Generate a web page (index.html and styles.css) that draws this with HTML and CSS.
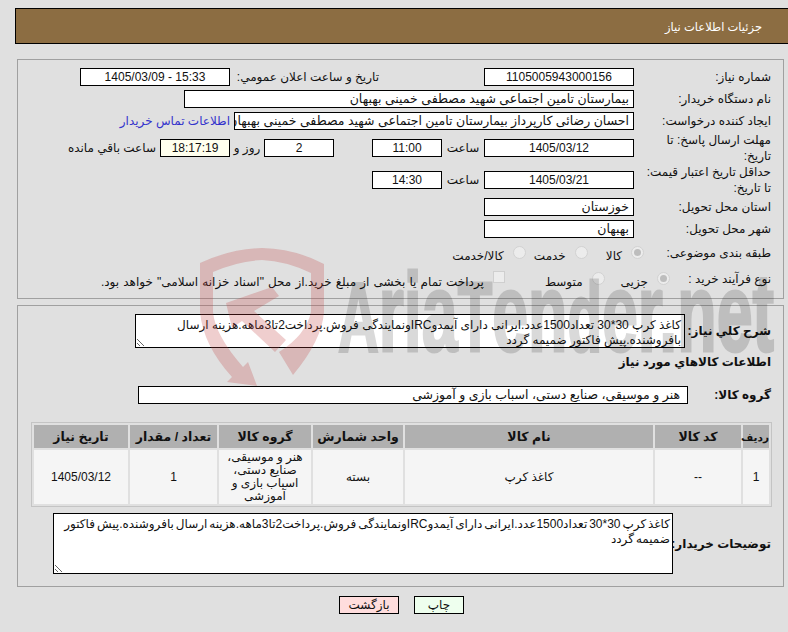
FILE: index.html
```html
<!DOCTYPE html>
<html lang="fa">
<head>
<meta charset="utf-8">
<title>جزئیات اطلاعات نیاز</title>
<link rel="stylesheet" href="styles.css">
</head>
<body>
<div class="page" dir="rtl">
  <header class="title">جزئیات اطلاعات نیاز</header>

  <section class="panel panel-top">
    <div class="row h22">
      <div class="lab">شماره نیاز:</div>
      <div class="box w150 center">1105005943000156</div>
      <div class="m-pub">تاریخ و ساعت اعلان عمومي:</div>
      <div class="box w150 center" dir="ltr">1405/03/09 - 15:33</div>
    </div>
    <div class="row h22">
      <div class="lab">نام دستگاه خریدار:</div>
      <div class="box w450 val">بیمارستان تامین اجتماعی شهید مصطفی خمینی بهبهان</div>
    </div>
    <div class="row h22">
      <div class="lab">ایجاد کننده درخواست:</div>
      <div class="box w400 val">احسان رضائی کارپرداز بیمارستان تامین اجتماعی شهید مصطفی خمینی بهبهان</div>
      <a class="link" href="#">اطلاعات تماس خریدار</a>
    </div>
    <div class="row h32">
      <div class="lab">مهلت ارسال پاسخ: تا<br>تاریخ:</div>
      <div class="box w150 center">1405/03/12</div>
      <div class="unit">ساعت</div>
      <div class="box w70 center">11:00</div>
      <div class="gap30"></div>
      <div class="box w70 center">2</div>
      <div class="unit unit-day">روز و</div>
      <div class="box w70 center yellow">18:17:19</div>
      <div class="rest">ساعت باقي مانده</div>
    </div>
    <div class="row h32">
      <div class="lab">حداقل تاریخ اعتبار قیمت:<br>تا تاریخ:</div>
      <div class="box w150 center">1405/03/21</div>
      <div class="unit">ساعت</div>
      <div class="box w70 center">14:30</div>
    </div>
    <div class="row h22">
      <div class="lab">استان محل تحویل:</div>
      <div class="box w150 val">خوزستان</div>
    </div>
    <div class="row h22">
      <div class="lab">شهر محل تحویل:</div>
      <div class="box w150 val">بهبهان</div>
    </div>
    <div class="row h26">
      <div class="lab lab-r1">طبقه بندی موضوعی:</div>
      <span class="radio on"></span><span class="opt o1">کالا</span>
      <span class="radio"></span><span class="opt o2">خدمت</span>
      <span class="radio"></span><span class="opt">کالا/خدمت</span>
    </div>
    <div class="row h26">
      <div class="lab lab-r2">نوع فرآیند خرید :</div>
      <span class="radio on"></span><span class="opt o3">جزیی</span>
      <span class="radio"></span><span class="opt o4">متوسط</span>
      <span class="check"></span><span class="opt opt-long">پرداخت تمام یا بخشی از مبلغ خرید.از محل "اسناد خزانه اسلامی" خواهد بود.</span>
    </div>
  </section>

  <section class="panel panel-bottom">
    <div class="row summary">
      <div class="lab strong lab-s">شرح کلي نياز:</div>
      <textarea class="area area-s" readonly>کاغذ کرپ 30*30 تعداد1500عدد.ایرانی دارای آیمدوIRCونمایندگی فروش.پرداخت2تا3ماهه.هزینه ارسال بافروشنده.پیش فاکتور ضمیمه گردد</textarea>
    </div>
    <div class="subhead">اطلاعات کالاهاي مورد نياز</div>
    <div class="row group">
      <div class="lab strong lab-g">گروه کالا:</div>
      <div class="box w550 val pad-g">هنر و موسیقی، صنایع دستی، اسباب بازی و آموزشی</div>
    </div>
    <table class="items">
      <thead>
        <tr>
          <th class="c1">ردیف</th><th class="c2">کد کالا</th><th class="c3">نام کالا</th><th class="c4">واحد شمارش</th><th class="c5">گروه کالا</th><th class="c6">تعداد / مقدار</th><th class="c7">تاریخ نیاز</th>
        </tr>
      </thead>
      <tbody>
        <tr>
          <td>1</td><td>--</td><td>کاغذ کرپ</td><td>بسته</td><td>هنر و موسیقی، صنایع دستی، اسباب بازی و آموزشی</td><td>1</td><td>1405/03/12</td>
        </tr>
      </tbody>
    </table>
    <div class="row notes">
      <div class="lab strong lab-n">توضیحات خریدار:</div>
      <textarea class="area area-n" readonly>کاغذ کرپ 30*30 تعداد1500عدد.ایرانی دارای آیمدوIRCونمایندگی فروش.پرداخت2تا3ماهه.هزینه ارسال بافروشنده.پیش فاکتور ضمیمه گردد</textarea>
    </div>
  </section>

  <div class="actions">
    <button class="btn print" type="button">چاپ</button>
    <button class="btn back" type="button">بازگشت</button>
  </div>
</div>

<svg class="mark" width="788" height="632" viewBox="0 0 788 632" aria-hidden="true">
  <g fill="#bf3a3a" fill-opacity=".25">
    <path d="M200 263 Q230 249 262 248 Q296 249 324 264 V312 Q322 340 293 375 L279 352 Q306 335 311 312 V273 Q286 261 262 260 Q238 261 213 272 V312 Q215 335 243 367 L248 362 L257 386 L227 382 L232 377 Q203 345 200 312 Z"/>
    <path d="M226 303 L272 287 L279 296 L254 311 L286 340 L275 352 L242 321 L232 328 Z"/>
  </g>
  <g class="mark-group">
    <text class="mark-text" x="338" y="351" textLength="436" lengthAdjust="spacingAndGlyphs"><tspan class="mark-cap">A</tspan>ria<tspan class="mark-cap">T</tspan>en<tspan class="mark-cap">d</tspan>er.net</text>
  </g>
</svg>
</body>
</html>
```
FILE: styles.css
```css
html, body { margin: 0; padding: 0; height: 100%; overflow: hidden; }
body { background: #e0e0e0; color: #111; font: 12px "Liberation Sans", "DejaVu Sans", sans-serif; position: relative; }
.page { width: 773px; margin-left: 15px; padding-top: 8px; }
.title { height: 34px; line-height: 36px; margin-bottom: 15px; background: #8c6d42; border: 1px solid #000; border-right: 0; color: #fff; font-size: 11.5px; padding-right: 26px; }
.panel { width: 767px; margin-right: 4px; border: 1px solid #a0a0a0; box-sizing: border-box; }
.panel-top { height: 240px; padding-top: 6px; margin-bottom: 6px; }
.panel-bottom { height: 282px; padding-top: 8px; }
.row { display: flex; align-items: center; }
.h22 { height: 22px; } .h32 { height: 32px; } .h26 { height: 26px; }
.lab { width: 149px; flex: none; padding-right: 12px; box-sizing: border-box; line-height: 16px; white-space: nowrap; }
.lab-r1 { width: 139px; }
.lab-r2 { width: 113px; }
.lab-s { width: 98px; }
.lab-g { width: 95px; }
.lab-n { width: 110px; }
.strong { font-weight: bold; }
.box { height: 18px; line-height: 16px; border: 1px solid #000; background: #fff; box-sizing: border-box; padding: 0 4px; white-space: nowrap; overflow: hidden; flex: none; }
.val { font-size: 12.5px; }
.center { text-align: center; }
.w150 { width: 150px; } .w450 { width: 450px; } .w400 { width: 400px; } .w70 { width: 70px; } .w550 { width: 550px; }
.yellow { background: #ffffee; }
.m-pub { width: 254px; padding-right: 105px; box-sizing: border-box; white-space: nowrap; flex: none; }
.link { color: #3333cc; text-decoration: none; margin-right: 4px; }
.unit { width: 42px; text-align: center; flex: none; }
.unit-day { width: 34px; }
.gap30 { width: 38px; flex: none; }
.rest { margin-right: 4px; }
.radio { width: 13px; height: 13px; box-sizing: border-box; border-radius: 50%; background: #ececec; border: 1px solid #d2d2d2; margin-top: -1px; flex: none; position: relative; }
.radio.on::after { content: ""; position: absolute; inset: 2px; border-radius: 50%; background: #bdbdbd; }
.check { width: 12px; height: 12px; box-sizing: border-box; background: #ececec; border: 1px solid #cfcfcf; margin-top: -4px; flex: none; }
.opt { margin-right: 9px; margin-top: 6px; white-space: nowrap; }
.opt-long { word-spacing: .8px; }
.o1 { margin-left: 18px; } .o2 { margin-left: 8px; } .o3 { margin-left: 16px; } .o4 { margin-left: 40px; }
.area { display: block; box-sizing: border-box; border: 1px solid #000; background: #fff; font: 12px "Liberation Sans", "DejaVu Sans", sans-serif; line-height: 15px; color: inherit; padding: 3px 3px 0; margin: 0; outline: 0; flex: none; }
.area-s { width: 550px; height: 34px; }
.area-n { width: 620px; height: 61px; padding: 3px 2px 0; word-spacing: -1.4px; }
.summary { height: 34px; }
.subhead { font-weight: bold; margin: 6px 12px 0 0; height: 16px; line-height: 16px; }
.group { margin-top: 16px; height: 18px; }
.pad-g { padding-right: 7px; }
.items { border-collapse: separate; border-spacing: 2px; border: 1px solid #c4c4c4; width: 741px; margin: 18px 11px 0 0; table-layout: fixed; font-size: 12px; }
.items th { background: #b0b0b0; height: 23px; padding: 0; font-size: 12.5px; }
.items td { background: #f5f5f5; height: 54px; padding: 0 6px; text-align: center; line-height: 13px; }
.items th.c1 { font-size: 10.5px; }
.c1 { width: 26px; } .c2 { width: 86px; } .c3 { width: 248px; } .c4 { width: 90px; } .c5 { width: 92px; } .c6 { width: 87px; } .c7 { width: 94px; }
.notes { margin-top: 6px; height: 61px; }
.actions { display: flex; gap: 15px; margin-top: 9px; padding-right: 324px; }
.btn { height: 18px; border: 1px solid #000; font: inherit; color: inherit; padding: 0; line-height: 14px; }
.print { width: 50px; background: #eeffee; }
.back { width: 60px; background: #ffdddd; }
.mark { position: absolute; left: 0; top: 0; pointer-events: none; }
.mark-group { opacity: .15; }
.mark-text { font: bold 112px "Liberation Sans Narrow", "Liberation Sans", sans-serif; fill: #000; stroke: #000; stroke-width: 3px; }
.mark-cap { font-size: 98px; }
```
